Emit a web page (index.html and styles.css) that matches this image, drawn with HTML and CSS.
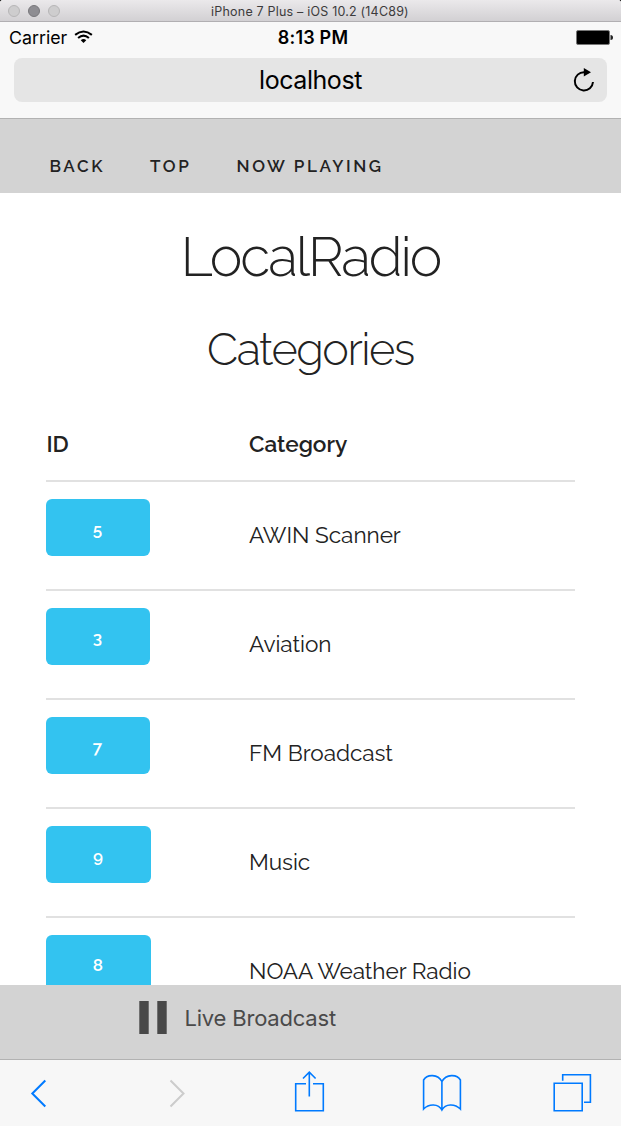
FILE: index.html
```
<!DOCTYPE html>
<html lang="en">
<head>
<meta charset="utf-8">
<title>LocalRadio</title>
<link rel="stylesheet" href="styles.css">
</head>
<body>
<div class="window">
  <header class="titlebar">
    <div class="lights"><i class="light"></i><i class="light light-dark"></i><i class="light"></i></div>
    <span class="window-title">iPhone 7 Plus – iOS 10.2 (14C89)</span>
  </header>
  <section class="browser">
    <div class="status">
      <div class="carrier"><span>Carrier</span>
        <svg class="wifi" width="19" height="14" viewBox="0 0 20 14" fill="none" stroke="#000" stroke-width="2.2"><path d="M1.2 4.7Q10-2.3 18.8 4.7M4.3 8Q10 3.2 15.7 8"/><path d="M7.1 10.4Q10 8 12.9 10.4L10 13.3z" fill="#000" stroke="none"/></svg>
      </div>
      <span class="time">8:13 PM</span>
      <svg class="battery" width="37" height="15" viewBox="0 0 37 15"><rect x=".5" y=".5" width="33" height="14" rx="1.5" fill="#000" stroke="#777"/><path d="M34.5 5Q37 5 37 7.5T34.5 10z" fill="#222"/></svg>
    </div>
    <div class="address"><span class="host">localhost</span>
      <svg class="reload" width="22" height="24" viewBox="0 0 22 24"><path d="M11.2 4.2A9.1 9.1 0 1 0 20 14" fill="none" stroke="#000" stroke-width="2"/><path d="M10.8 0L18 4.3L10.8 8.5z"/></svg>
    </div>
  </section>
  <nav class="nav"><a class="nav-back">BACK</a><a class="nav-top">TOP</a><a class="nav-now">NOW PLAYING</a></nav>
  <main class="content">
    <h1 class="title">LocalRadio</h1>
    <h2 class="subtitle">Categories</h2>
    <div class="table">
      <div class="row head"><span>ID</span><span>Category</span></div>
      <div class="row"><a class="button">5</a><span class="name">AWIN Scanner</span></div>
      <div class="row"><a class="button">3</a><span class="name">Aviation</span></div>
      <div class="row"><a class="button">7</a><span class="name">FM Broadcast</span></div>
      <div class="row"><a class="button button-wide">9</a><span class="name">Music</span></div>
      <div class="row"><a class="button button-wide">8</a><span class="name">NOAA Weather Radio</span></div>
    </div>
  </main>
  <section class="player">
    <svg class="pause" width="28" height="33" viewBox="0 0 28 33" fill="#484848"><path d="M.3 0h9.4v33H.3zM18.3 0h9.4v33h-9.4z"/></svg>
    <span class="live">Live Broadcast</span>
  </section>
  <footer class="toolbar">
    <svg width="621" height="66" viewBox="0 1060 621 66" fill="none" stroke="#007aff" stroke-width="1.6">
      <path d="M45.3 1080.5L32.3 1093.5L45.3 1106.5" stroke-width="2"/>
      <path d="M170.5 1080.5L183.5 1093.5L170.5 1106.5" stroke="#ccc" stroke-width="2"/>
      <path d="M306 1083.7H295.7V1110.8H323.3V1083.7H313M309.3 1096.5V1072.2M303 1078.5L309.3 1072.2L315.6 1078.5"/>
      <path d="M441.9 1081.5C438 1073.9 427 1073.9 423.6 1080V1109C429 1103.5 438.5 1103.5 441.9 1110C445.3 1103.5 454.8 1103.5 460.4 1109V1080C457 1073.9 446 1073.9 441.9 1081.5V1110.5"/>
      <path d="M562.7 1080.8V1074.7H590.4V1102.3H584M554.2 1083.2H582.2V1110.8H554.2z"/>
    </svg>
  </footer>
</div>
</body>
</html>
```
FILE: styles.css
```
* { box-sizing: border-box; }
body { margin: 0; background: #000; font-family: Inter, "Liberation Sans", sans-serif; color: #000; }
.window { width: 621px; height: 1126px; display: flex; flex-direction: column; overflow: hidden; background: #fff; border-radius: 3px 3px 0 0; }
.titlebar { height: 22px; flex: none; display: grid; grid-template-columns: 100px 1fr 101px; align-items: center; background: linear-gradient(#ebe9eb, #d2d0d3); border-bottom: 1px solid #b1afb2; }
.lights { display: flex; gap: 8px; padding-left: 8px; }
.light { width: 12px; height: 12px; border-radius: 50%; background: #cecdce; border: 1px solid #b7b6b7; }
.light-dark { background: #8e8d92; border-color: #78777b; }
.window-title { text-align: center; font-size: 12.5px; letter-spacing: .2px; color: #3c3b3c; white-space: nowrap; padding-top: 1px; }
.browser { height: 97px; flex: none; background: #f8f8f8; border-bottom: 1px solid #b2b2b2; }
.status { height: 36px; display: grid; grid-template-columns: 200px 1fr 200px; align-items: center; padding: 0 8px 5px 9px; }
.carrier { display: flex; gap: 7px; align-items: center; font-size: 17.8px; line-height: 20px; }
.wifi { margin-top: -2px; }
.time { text-align: center; font-size: 18px; font-weight: 600; line-height: 20px; letter-spacing: .2px; padding-left: 4px; }
.battery { justify-self: end; }
.address { margin: 0 14px; height: 44px; border-radius: 8px; background: #e5e5e5; display: grid; grid-template-columns: 40px 1fr 40px; align-items: center; }
.host { grid-column: 2; text-align: center; font-size: 25px; letter-spacing: -.45px; padding-bottom: 1px; }
.reload { margin-left: 6px; }
.nav { height: 74px; flex: none; background: #d3d3d3; display: flex; padding: 37px 0 0 49.5px; font: 600 17px/20px Raleway, Lato, sans-serif; letter-spacing: 2.6px; color: #222; }
.nav-back { width: 100.5px; }
.nav-top { width: 86.5px; }
.content { height: 792px; flex: none; overflow: hidden; padding: 0 46.4px; font-family: Raleway, Lato, sans-serif; color: #222; }
.title, .subtitle { margin: 0; text-align: center; font-weight: 300; white-space: nowrap; }
.title { font-size: 55px; line-height: 70px; padding-top: 29px; letter-spacing: -2.05px; }
.subtitle { font-size: 45px; line-height: 60px; padding-top: 28px; letter-spacing: -1.5px; }
.table { margin-top: 36px; }
.row { height: 109px; display: grid; grid-template-columns: 202.6px 1fr; align-items: start; border-bottom: 2px solid #e1e1e1; font-size: 22.6px; line-height: 30px; padding-top: 17.4px; }
.head { height: 66px; font-weight: 600; padding-top: 13px; }
.button { width: 103.6px; height: 57px; border-radius: 6px; background: #33c3f0; color: #fff; font-size: 17px; font-weight: 600; line-height: 20px; padding: 20px 1.5px 0 0; text-align: center; }
.button-wide { width: 104.6px; }
.name { padding-top: 21px; white-space: nowrap; letter-spacing: -.05px; }
.player { height: 74px; flex: none; background: #d3d3d3; display: flex; align-items: center; gap: 17.5px; padding: 0 0 9px 139px; color: #4a4a4a; font-size: 22px; letter-spacing: -.2px; }
.toolbar { height: 67px; flex: none; border-top: 1px solid #b2b2b2; background: #f7f7f7; }
.toolbar svg { display: block; }
```
